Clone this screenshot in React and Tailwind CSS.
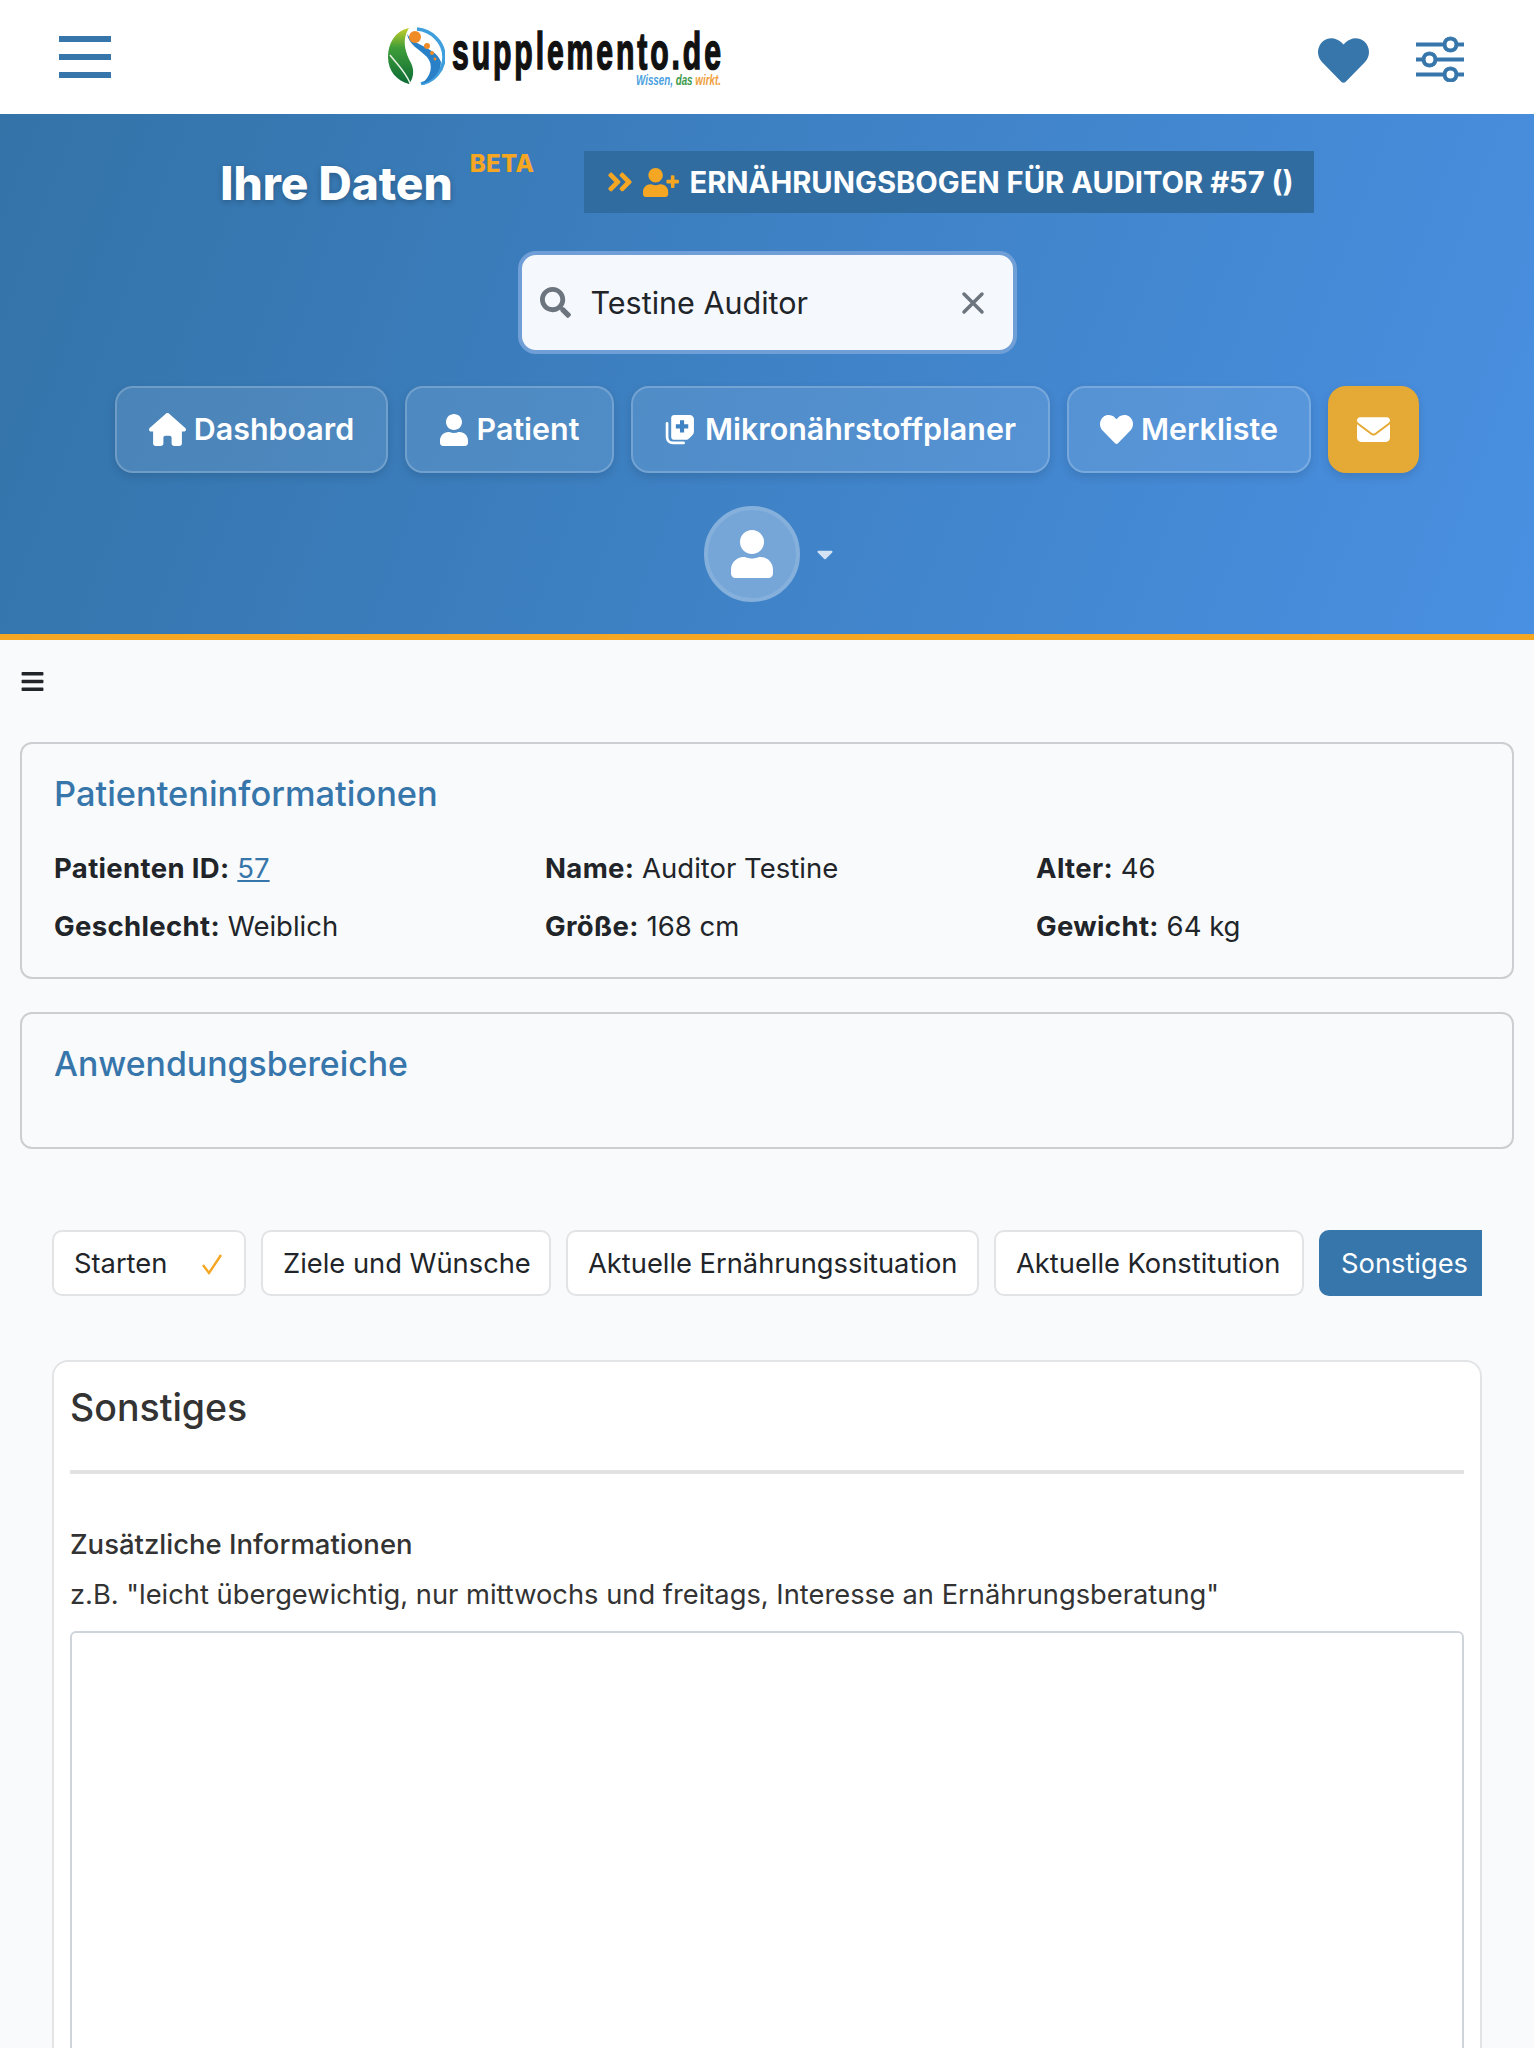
import React from "react";
import { FaHeart, FaUser, FaSearch, FaUserPlus, FaAngleDoubleRight, FaCaretDown, FaBars } from "react-icons/fa";
import { FaHouse, FaEnvelope } from "react-icons/fa6";
import { BsSliders } from "react-icons/bs";

const Logo = () => (
  <div className="flex items-start ml-[276px] w-[338px] h-[60px] relative">
    <svg width="58" height="58" viewBox="0 0 58 58" className="shrink-0">
      <defs>
        <linearGradient id="lg" x1="0" y1="0" x2="0" y2="1">
          <stop offset="0" stopColor="#c5cf2a" />
          <stop offset="0.35" stopColor="#3f9e38" />
          <stop offset="1" stopColor="#0d6b36" />
        </linearGradient>
      </defs>
      <path d="M22 1C8 4 1 16 1 30c0 14 9 24 21 27 4-5 6-13 2-21C19 26 14 14 22 1z" fill="url(#lg)" />
      <path d="M3 28c6 8 15 16 20 28" stroke="#e8f3e6" strokeWidth="1.500" fill="none" />
      <path d="M30 2c14 1 27 13 27 28 0 13-10 24-23 27" stroke="#3f9fdc" strokeWidth="3.500" fill="none" />
      <path d="M20 7c2 11 12 15 20 23 7 8 4 20-6 27 12-2 20-13 20-22-3-9-11-12-20-17-6-3-11-6-14-11z" fill="#2a80c6" />
      <circle cx="28" cy="10" r="6" fill="#f08c28" />
      <circle cx="40" cy="19" r="3" fill="#f08c28" />
      <circle cx="45" cy="26" r="2" fill="#f08c28" />
      <circle cx="48" cy="32" r="1.400" fill="#f08c28" />
    </svg>
    <div className="ml-[7px] mt-[4px] w-[272px] h-[40px]">
      <span className="block origin-left scale-x-[0.58] whitespace-nowrap text-[52px] tracking-[5px] leading-[40px] font-bold text-[#111] [font-family:'Liberation_Sans',sans-serif] [-webkit-text-stroke:1.6px_#111]">supplemento.de</span>
    </div>
    <div className="absolute left-[249px] top-[45px] w-[90px] whitespace-nowrap italic font-bold text-[14px] leading-[16px] origin-left scale-x-[0.7] [font-family:'Liberation_Sans',sans-serif]">
      <span className="text-[#4a9fe0]">Wissen, </span><span className="text-[#3d9a4a]">das </span><span className="text-[#f0a040]">wirkt.</span>
    </div>
  </div>
);

const MedIcon = () => (
  <svg width="31" height="31" viewBox="0 0 30 30" fill="none">
    <path d="M2 9v13c0 3 2 6 6 6h10" stroke="#fff" strokeWidth="2.600" strokeLinecap="round" />
    <path d="M9 1h15c2 0 4 2 4 4v12c0 2-1 3-2 4l-3 3c-1 1-2 1-3 1H9c-2 0-3-1-3-3V4c0-2 1-3 3-3z" fill="#fff" />
    <path d="M14.500 6h4v4h4v4h-4v4h-4v-4h-4v-4h4z" fill="#3f83c4" />
  </svg>
);

const NavBtn = ({ icon, label, className }) => (
  <button className={`h-[87px] flex items-center justify-center rounded-[18px] border-2 border-white/20 bg-white/10 shadow-[0_4px_10px_rgba(0,0,0,0.12)] text-white text-[30.400px] font-semibold ${className}`}>
    {icon}
    <span className="pt-[1px]">{label}</span>
  </button>
);

const Info = ({ k, v, link }) => (
  <div className="text-[27.500px] leading-[40px] text-[#212529]">
    <b className="font-bold tracking-[0.35px]">{k}</b>{" "}
    {link ? <a className="text-[#3776ab] underline">{v}</a> : v}
  </div>
);

const Tab = ({ children, className }) => (
  <div className={`h-[66px] flex items-center rounded-[10px] border-2 border-[#e2e3e5] bg-white text-[#212529] text-[27.300px] pt-[2px] whitespace-nowrap ${className}`}>{children}</div>
);

export default function App() {
  return (
    <div className="w-[1534px] h-[2048px] overflow-hidden bg-[#f9fafb] [font-family:Inter,sans-serif]">
      <header className="h-[114px] bg-white flex items-center pl-[59px] pr-[70px]">
        <div className="w-[52px] flex flex-col gap-[12px] mt-[-1px]">
          <div className="h-[6px] bg-[#3776ab]" />
          <div className="h-[6px] bg-[#3776ab]" />
          <div className="h-[6px] bg-[#3776ab]" />
        </div>
        <Logo />
        <div className="ml-auto flex items-center gap-[47px]">
          <FaHeart className="text-[#3776ab] w-[51px] h-[51px] mt-[6px]" />
          <BsSliders className="text-[#3776ab] w-[48px] h-[48px] mt-[2px]" stroke="currentColor" strokeWidth="0.35" />
        </div>
      </header>

      <section className="h-[526px] border-b-[6px] border-[#f5a623] bg-[linear-gradient(110deg,#3373a8_0%,#4a90e2_100%)] flex flex-col items-center pt-[37px]">
        <div className="flex items-start">
          <h1 className="text-[46px] leading-[62px] font-extrabold text-white mt-[1px] [text-shadow:0_2px_6px_rgba(0,0,0,0.25)]">Ihre Daten</h1>
          <span className="ml-[17px] mt-[-2px] text-[24px] leading-[30px] font-extrabold text-[#f5a623] tracking-[0.4px]">BETA</span>
          <div className="ml-[50px] h-[62px] bg-[#306ca0] flex items-center pl-[22px] pr-[20px] text-white text-[29.200px] font-bold whitespace-nowrap">
            <FaAngleDoubleRight className="text-[#f5a623] w-[28px] h-[30px] mr-[9px]" />
            <FaUserPlus className="text-[#f5a623] w-[36px] h-[29px] mr-[10px]" />
            <span className="pt-[1px]">ERNÄHRUNGSBOGEN FÜR AUDITOR #57 ()</span>
          </div>
        </div>

        <div className="mt-[37px] w-[499px] h-[103px] rounded-[18px] border-[4px] border-[#6f9fd6] bg-[#f5f8fd] flex items-center pl-[18px] pr-[28px]">
          <FaSearch className="text-[#6c757d] w-[31px] h-[31px]" />
          <span className="ml-[20px] text-[30.500px] text-[#212529] pt-[1px]">Testine Auditor</span>
          <svg className="ml-auto" width="24" height="24" viewBox="0 0 24 24" fill="none" stroke="#6c757d" strokeWidth="3.500" strokeLinecap="round"><path d="M3 3l18 18M21 3L3 21" /></svg>
        </div>

        <div className="mt-[32px] flex items-center gap-[17px]">
          <NavBtn className="w-[273px] gap-[8px]" icon={<FaHouse className="w-[37px] h-[33px]" />} label="Dashboard" />
          <NavBtn className="w-[209px] gap-[9px]" icon={<FaUser className="w-[28px] h-[32px]" />} label="Patient" />
          <NavBtn className="w-[419px] gap-[9px]" icon={<MedIcon />} label="Mikronährstoffplaner" />
          <NavBtn className="w-[244px] gap-[8px]" icon={<FaHeart className="w-[33px] h-[33px]" />} label="Merkliste" />
          <button className="w-[91px] h-[87px] rounded-[18px] bg-[#e5a935] flex items-center justify-center shadow-[0_4px_10px_rgba(0,0,0,0.12)]">
            <FaEnvelope className="text-white w-[33px] h-[33px]" />
          </button>
        </div>

        <div className="mt-[33px] flex items-center ml-[7px]">
          <div className="w-[96px] h-[96px] rounded-full bg-[#76a6d8] border-[4px] border-[#85b0dc] flex items-center justify-center">
            <FaUser className="text-white w-[42px] h-[48px]" />
          </div>
          <FaCaretDown className="ml-[12px] text-[#d4e3f3] w-[26px] h-[26px]" />
        </div>
      </section>

      <main className="px-[20px]">
        <div className="h-[102px] pt-[29px]">
          <FaBars className="text-[#212529] w-[25px] h-[25px]" />
        </div>

        <div className="h-[237px] rounded-[12px] border-2 border-[#ccced1] px-[32px] pt-[27px]">
          <h2 className="text-[34.400px] leading-[46px] font-medium text-[#3776ab]">Patienteninformationen</h2>
          <div className="mt-[31px] grid grid-cols-3 gap-y-[18px] w-[1473px]">
            <Info k="Patienten ID:" v="57" link />
            <Info k="Name:" v="Auditor Testine" />
            <Info k="Alter:" v="46" />
            <Info k="Geschlecht:" v="Weiblich" />
            <Info k="Größe:" v="168 cm" />
            <Info k="Gewicht:" v="64 kg" />
          </div>
        </div>

        <div className="mt-[33px] h-[137px] rounded-[12px] border-2 border-[#ccced1] px-[32px] pt-[27px]">
          <h2 className="text-[33.800px] leading-[46px] font-medium text-[#3776ab]">Anwendungsbereiche</h2>
        </div>

        <div className="mx-[32px] mt-[81px] w-[1430px] flex items-center gap-[15px] overflow-hidden">
          <Tab className="w-[194px] pl-[20px] justify-between pr-[20px] shrink-0">
            <span>Starten</span>
            <svg width="24" height="24" viewBox="0 0 24 24" fill="none" stroke="#f5a623" strokeWidth="2.400"><path d="M3 13l6 8L21 3" /></svg>
          </Tab>
          <Tab className="w-[290px] pl-[20px] shrink-0">Ziele und Wünsche</Tab>
          <Tab className="w-[413px] pl-[20px] shrink-0">Aktuelle Ernährungssituation</Tab>
          <Tab className="w-[310px] pl-[20px] shrink-0">Aktuelle Konstitution</Tab>
          <div className="w-[163px] shrink-0 h-[66px] flex items-center pl-[22px] pt-[2px] rounded-l-[10px] bg-[#3776ab] text-white text-[27.300px] whitespace-nowrap overflow-hidden">Sonstiges</div>
        </div>

        <div className="mx-[32px] mt-[64px] w-[1430px] h-[900px] rounded-t-[16px] border-2 border-[#e2e4e6] bg-white px-[16px] pt-[21px]">
          <h3 className="text-[37.500px] leading-[50px] font-medium text-[#333]">Sonstiges</h3>
          <div className="mt-[37px] h-[4px] bg-[#e2e2e2]" />
          <div className="mt-[50px] text-[27.500px] leading-[40px] font-medium text-[#333]">Zusätzliche Informationen</div>
          <div className="mt-[11px] text-[27.300px] leading-[40px] text-[#333]">z.B. "leicht übergewichtig, nur mittwochs und freitags, Interesse an Ernährungsberatung"</div>
          <div className="mt-[16px] h-[600px] rounded-[6px] border-2 border-[#ced4da] bg-white" />
        </div>
      </main>
    </div>
  );
}
